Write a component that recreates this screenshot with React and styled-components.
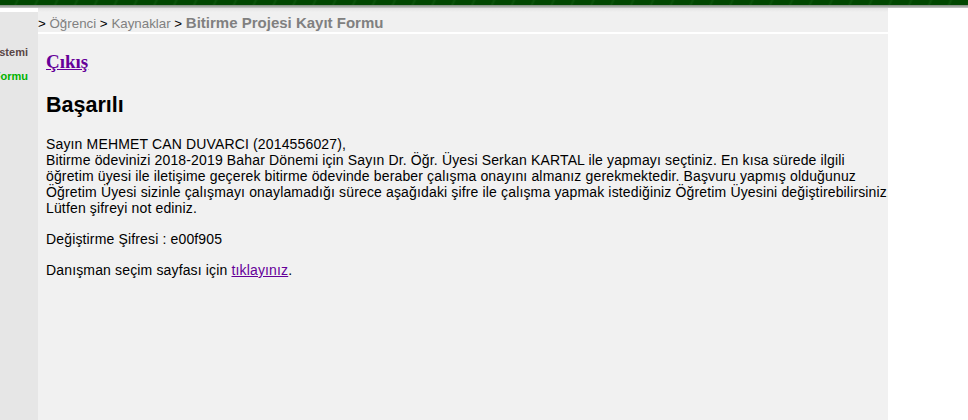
import React from "react";
import styled, { createGlobalStyle } from "styled-components";

const GlobalStyle = createGlobalStyle`
  html, body {
    margin: 0;
    padding: 0;
    background: #ffffff;
    font-family: "Liberation Sans", Arial, sans-serif;
    overflow: hidden;
  }
`;

const Page = styled.div`
  width: 968px;
  height: 420px;
  display: flex;
  flex-direction: column;
  background: #ffffff;
  overflow: hidden;
`;

const TopBar = styled.div`
  height: 5px;
  background: repeating-linear-gradient(
    115deg,
    #004700 0px,
    #004700 14px,
    #0a530a 16px,
    #004700 18px
  );
`;

const TopShade = styled.div`
  height: 3px;
  background: linear-gradient(#7d8a7d, #c9c9c9);
`;

const Body = styled.div`
  flex: 1;
  display: flex;
  min-height: 0;
`;

const Sidebar = styled.div`
  width: 38px;
  flex: none;
  margin-top: 4px;
  background: #e6e6e6;
  display: flex;
  flex-direction: column;
  align-items: flex-end;
  padding-top: 34px;
  gap: 11px;
  overflow: hidden;
`;

const SideItem = styled.div`
  font-size: 11px;
  font-weight: bold;
  white-space: nowrap;
  line-height: 13px;
  color: ${(p) => (p.$active ? "#00b300" : "#5a4747")};
  margin-right: 10px;
`;

const Main = styled.div`
  width: 850px;
  flex: none;
  display: flex;
  flex-direction: column;
  overflow: hidden;
`;

const Crumbs = styled.div`
  height: 19px;
  padding-top: 5px;
  background: linear-gradient(#e3e3e3 0px, #f0f0f0 4px, #f0f0f0 100%);
  border-bottom: 2px solid #ffffff;
  font-size: 13.33px;
  line-height: 19px;
  white-space: nowrap;
  color: #000;
`;

const Crumb = styled.span`
  color: #808080;
  font-size: ${(p) => (p.$current ? "15px" : "13.33px")};
  font-weight: ${(p) => (p.$current ? "bold" : "normal")};
`;

const Content = styled.div`
  flex: 1;
  background: #f1f1f1;
  padding: 17px 0 0 8px;
`;

const Logout = styled.h3`
  margin: 0;
  font-family: "Liberation Serif", "Times New Roman", serif;
  font-size: 19px;
  line-height: 22px;
  font-weight: bold;

  a {
    color: #660099;
    text-decoration: underline;
  }
`;

const Title = styled.h2`
  margin: 19px 0 0;
  font-size: 21.5px;
  line-height: 26px;
  font-weight: bold;
  color: #000;
`;

const Para = styled.p`
  margin: ${(p) => p.$gap || "15px"} 0 0;
  font-size: 14px;
  letter-spacing: 0.15px;
  line-height: 16px;
  color: #000;
  white-space: nowrap;

  a {
    color: #660099;
    text-decoration: underline;
  }
`;

export default function App() {
  return (
    <Page>
      <GlobalStyle />
      <TopBar />
      <TopShade />
      <Body>
        <Sidebar>
          <SideItem>Bilgi Sistemi</SideItem>
          <SideItem $active>Kayıt Formu</SideItem>
        </Sidebar>
        <Main>
          <Crumbs>
            {"> "}
            <Crumb>Öğrenci</Crumb>
            {" > "}
            <Crumb>Kaynaklar</Crumb>
            {" > "}
            <Crumb $current>Bitirme Projesi Kayıt Formu</Crumb>
          </Crumbs>
          <Content>
            <Logout>
              <a href="#">Çıkış</a>
            </Logout>
            <Title>Başarılı</Title>
            <Para $gap="18px">
              Sayın MEHMET CAN DUVARCI (2014556027),
              <br />
              Bitirme ödevinizi 2018-2019 Bahar Dönemi için Sayın Dr. Öğr. Üyesi Serkan KARTAL ile yapmayı seçtiniz. En kısa sürede ilgili
              <br />
              öğretim üyesi ile iletişime geçerek bitirme ödevinde beraber çalışma onayını almanız gerekmektedir. Başvuru yapmış olduğunuz
              <br />
              Öğretim Üyesi sizinle çalışmayı onaylamadığı sürece aşağıdaki şifre ile çalışma yapmak istediğiniz Öğretim Üyesini değiştirebilirsiniz.
              <br />
              Lütfen şifreyi not ediniz.
            </Para>
            <Para>Değiştirme Şifresi : e00f905</Para>
            <Para>
              Danışman seçim sayfası için <a href="#">tıklayınız</a>.
            </Para>
          </Content>
        </Main>
      </Body>
    </Page>
  );
}
